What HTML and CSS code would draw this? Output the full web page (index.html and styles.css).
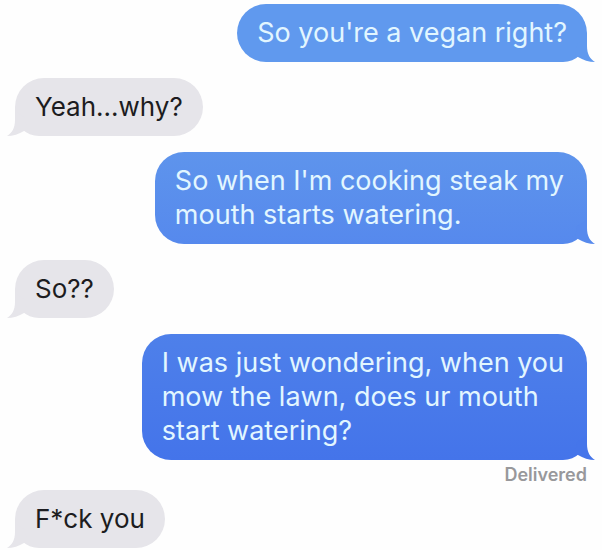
FILE: index.html
```html
<!DOCTYPE html>
<html lang="en">
<head>
    <meta charset="UTF-8">
    <meta name="viewport" content="width=device-width, initial-scale=1.0">
    <title>Messages</title>
    <link rel="stylesheet" href="styles.css">
</head>
<body>

    <main class="chat">
        <div class="message sent sent-light">
            So you're a vegan right?
            <svg class="tail" viewBox="0 0 24 24" aria-hidden="true"><path d="M15 0H16V8C16 16 19 21 24 24C18 24 12 22 7 19L4 18L6 6Z"/></svg>
        </div>
        <div class="message received">
            Yeah...why?
            <svg class="tail" viewBox="0 0 24 24" aria-hidden="true"><path d="M15 0H16V8C16 16 19 21 24 24C18 24 12 22 7 19L4 18L6 6Z"/></svg>
        </div>
        <div class="message sent sent-medium">
            So when I'm cooking steak my<br>mouth starts watering.
            <svg class="tail" viewBox="0 0 24 24" aria-hidden="true"><path d="M15 0H16V8C16 16 19 21 24 24C18 24 12 22 7 19L4 18L6 6Z"/></svg>
        </div>
        <div class="message received">
            So??
            <svg class="tail" viewBox="0 0 24 24" aria-hidden="true"><path d="M15 0H16V8C16 16 19 21 24 24C18 24 12 22 7 19L4 18L6 6Z"/></svg>
        </div>
        <div class="message sent sent-dark">
            I was just wondering, when you<br>mow the lawn, does ur mouth<br>start watering?
            <svg class="tail" viewBox="0 0 24 24" aria-hidden="true"><path d="M15 0H16V8C16 16 19 21 24 24C18 24 12 22 7 19L4 18L6 6Z"/></svg>
        </div>
        <div class="status">Delivered</div>
        <div class="message received">
            F*ck you
            <svg class="tail" viewBox="0 0 24 24" aria-hidden="true"><path d="M15 0H16V8C16 16 19 21 24 24C18 24 12 22 7 19L4 18L6 6Z"/></svg>
        </div>
    </main>

</body>
</html>
```
FILE: styles.css
```css
body {
    margin: 0;
    background-color: #fefefe;
    font-family: Inter, "Liberation Sans", sans-serif;
}
.chat {
    display: flex;
    flex-direction: column;
    align-items: flex-start;
    gap: 16px;
    padding: 4px 15px 2px;
}
.message {
    position: relative;
    padding: 12px 20px;
    border-radius: 29px;
    font-size: 26px;
    line-height: 34px;
}
.sent {
    align-self: flex-end;
    padding-right: 23px;
    border-bottom-right-radius: 24px;
    color: #e2f6ff;
    font-size: 27px;
}
.sent-light {
    padding-right: 20px;
    background: #6099ee;
    fill: #6099ee;
}
.sent-medium {
    background: linear-gradient(#5e94ec, #5689ed);
    fill: #578aed;
}
.sent-dark {
    background: linear-gradient(#4e80ea, #4474ea);
    fill: #4575ea;
}
.received {
    border-bottom-left-radius: 24px;
    background: #e6e5ea;
    color: #1c1c20;
    fill: #e6e5ea;
}
.tail {
    position: absolute;
    right: -8px;
    bottom: 0;
    width: 24px;
    height: 24px;
}
.received .tail {
    right: auto;
    left: -8px;
    transform: scaleX(-1);
}
.status {
    align-self: flex-end;
    margin: -10px 0;
    color: #98989b;
    font-size: 18px;
    font-weight: 600;
    line-height: 18px;
}
```
